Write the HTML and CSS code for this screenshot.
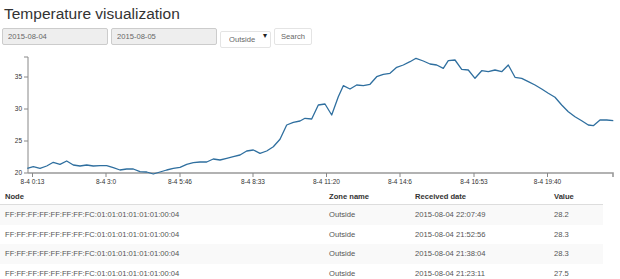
FILE: index.html
```html
<!DOCTYPE html>
<html lang="en">
<head>
  <meta charset="UTF-8" />
  <title>Temperature visualization</title>
  <link rel="stylesheet" href="styles.css">
</head>
<body>

  <h1 class="title">Temperature visualization</h1>

  <!-- Filters -->
  <form class="filters" onsubmit="return false;">
    <input type="text" class="date-field" value="2015-08-04" readonly>
    <input type="text" class="date-field" value="2015-08-05" readonly>
    <span class="zone-wrap">
      <select class="zone-select">
        <option>Outside</option>
        <option>Inside</option>
      </select>
    </span>
    <button type="submit" class="search-btn">Search</button>
  </form>

  <!-- Chart -->
  <svg class="chart" width="620" height="140" viewBox="0 48 620 140">
    <g class="axis">
      <path d="M24,57H28V173H24" />
      <path d="M24,77H28M24,109H28M24,141H28" />
      <text x="22" y="79.3">35</text>
      <text x="22" y="111.3">30</text>
      <text x="22" y="143.3">25</text>
      <text x="22" y="175.3">20</text>
    </g>
    <g class="axis axis-x">
      <path class="domain" d="M28,173H613V177" />
      <path d="M32.5,173V177M106,173V177M180,173V177M253,173V177M326.5,173V177M400,173V177M474,173V177M547.5,173V177" />
      <text x="32.5" y="184">8-4 0:13</text>
      <text x="106" y="184">8-4 3:0</text>
      <text x="180" y="184">8-4 5:46</text>
      <text x="253" y="184">8-4 8:33</text>
      <text x="326.5" y="184">8-4 11:20</text>
      <text x="400" y="184">8-4 14:6</text>
      <text x="474" y="184">8-4 16:53</text>
      <text x="547.5" y="184">8-4 19:40</text>
    </g>
    <polyline class="line" points="27.3,168.3 33.3,166.7 40,168.3 46.7,166 53.3,162.3 60,164.3 66.7,161 73.3,165 80,166 86.7,165 93.3,166 100,165.7 106.7,165.7 113.3,167.7 120,170 126.7,169 133.3,169 140,171.7 146.7,172 153.3,174 160,172 166.7,170 173.3,168.3 180,167.3 186.7,164.3 193.3,162.7 200,162 206.7,162 213.3,159 220,160 226.7,158.3 233.3,156.7 240,155 246.7,151 253.3,150 260,153.3 266.7,151 273.3,146.7 280,139.3 286.7,125 293.3,122.3 300,121 305,118.3 311.7,119 318.3,105 325,104 331.7,115 338.3,96.7 343.3,85.7 350,89 356.7,85 363.3,85.7 370,84.3 376.7,76.7 383.3,74.3 390,73.3 396.7,67.3 403.3,65 410,61.7 416,58.3 423.3,61 430,64 436.7,65 443.3,68.3 448.3,60.7 455,60 461.7,69.3 468.3,70 475,78.3 481.7,70.7 488.3,71.7 495,70 501.7,71.7 508.3,65 515,77.3 521.7,78.3 528.3,81.7 535,85 541.7,89 548.3,93.3 555,97.3 561.7,105 568.3,111.7 575,116.7 581.7,120.7 588.3,125 593.3,125.7 600,120 606.7,120 613.3,120.7" />
  </svg>

  <!-- Readings -->
  <table class="readings">
    <colgroup>
      <col class="col-node">
      <col class="col-zone">
      <col class="col-date">
      <col class="col-value">
    </colgroup>
    <thead>
      <tr>
        <th>Node</th>
        <th>Zone name</th>
        <th>Received date</th>
        <th>Value</th>
      </tr>
    </thead>
    <tbody>
      <tr>
        <td>FF:FF:FF:FF:FF:FF:FF:FC:01:01:01:01:01:01:00:04</td>
        <td>Outside</td>
        <td>2015-08-04 22:07:49</td>
        <td>28.2</td>
      </tr>
      <tr>
        <td>FF:FF:FF:FF:FF:FF:FF:FC:01:01:01:01:01:01:00:04</td>
        <td>Outside</td>
        <td>2015-08-04 21:52:56</td>
        <td>28.3</td>
      </tr>
      <tr>
        <td>FF:FF:FF:FF:FF:FF:FF:FC:01:01:01:01:01:01:00:04</td>
        <td>Outside</td>
        <td>2015-08-04 21:38:04</td>
        <td>28.3</td>
      </tr>
      <tr>
        <td>FF:FF:FF:FF:FF:FF:FF:FC:01:01:01:01:01:01:00:04</td>
        <td>Outside</td>
        <td>2015-08-04 21:23:11</td>
        <td>27.5</td>
      </tr>
    </tbody>
  </table>

</body>
</html>
```

FILE: styles.css
```css
body {
  margin: 0;
  font-family: "Liberation Sans", Arial, sans-serif;
  color: #333;
  background: #fff;
}

.title {
  margin: 5px 0 0 4px;
  font-size: 15.5px;
  line-height: 18px;
  font-weight: normal;
}

/* Filter bar */
.filters {
  display: flex;
  gap: 3px;
  margin: 5px 0 0 2px;
}

.filters input,
.filters select,
.filters button {
  box-sizing: border-box;
  height: 17px;
  margin: 0;
  font-family: inherit;
  font-size: 7.6px;
  color: #666;
  border: 1px solid #ccc;
  border-radius: 2px;
  outline: none;
}

.date-field {
  width: 106px;
  padding: 0 5px;
  background: #eee;
}

.zone-wrap {
  position: relative;
  display: inline-block;
}

.filters .zone-select {
  width: 51px;
  padding: 0 0 0 8px;
  color: #666;
  background: #fff;
  border: 1px solid #e4e4e4;
  appearance: none;
  -webkit-appearance: none;
}

.zone-wrap::after {
  content: "▾";
  position: absolute;
  right: 4px;
  top: 3px;
  font-size: 8px;
  color: #222;
  pointer-events: none;
}

.filters .search-btn {
  width: 38px;
  padding: 0;
  background: #fff;
  border: 1px solid #e4e4e4;
}

/* Chart */
.chart {
  display: block;
}

.axis path {
  fill: none;
  stroke: #888;
  stroke-width: 1;
}

.axis-x .domain {
  stroke: #999;
  stroke-width: 1.6;
}

.axis text {
  font-family: "Liberation Sans", Arial, sans-serif;
  font-size: 6.5px;
  fill: #333;
  text-anchor: end;
}

.axis-x text {
  text-anchor: middle;
}

.line {
  fill: none;
  stroke: #2f6f9f;
  stroke-width: 1.3;
  stroke-linejoin: round;
}

/* Readings table */
.readings {
  width: 603px;
  border-collapse: collapse;
  table-layout: fixed;
  font-size: 7.6px;
}

.col-node { width: 324px; }
.col-zone { width: 86px; }
.col-date { width: 139px; }
.col-value { width: 54px; }

.readings th {
  padding: 4px 5px 3px;
  line-height: 9px;
  text-align: left;
  font-weight: bold;
  color: #333;
  border-bottom: 1px solid #ddd;
}

.readings td {
  padding: 5px;
  line-height: 9.5px;
  white-space: nowrap;
  color: #555;
}

.readings tbody tr:nth-child(odd) {
  background: #f9f9f9;
}
```
